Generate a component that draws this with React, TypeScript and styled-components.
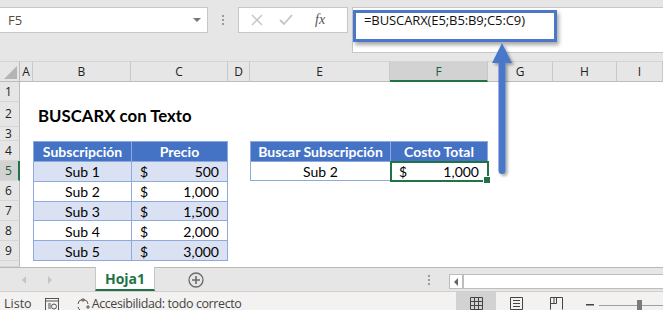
import React from "react";
import styled, { createGlobalStyle, css } from "styled-components";

const palette = {
  chrome: "#e6e6e6",
  chromeLine: "#c6c6c6",
  status: "#f3f2f1",
  excelGreen: "#217346",
  headBlue: "#4472c4",
  bandBlue: "#d9e1f2",
  tableLine: "#8ea9db",
  callout: "#4a77c9",
  text: "#000000",
  uiText: "#444444",
};

const GlobalStyle = createGlobalStyle`
  html, body {
    margin: 0;
    padding: 0;
    background: #ffffff;
  }
  * {
    box-sizing: border-box;
  }
`;

const Window = styled.div`
  position: relative;
  width: 663px;
  height: 310px;
  overflow: hidden;
  display: flex;
  flex-direction: column;
  background: #ffffff;
  font-family: "Open Sans", "Noto Sans", sans-serif;
`;

/* ---------- formula bar ---------- */

const FormulaBar = styled.div`
  height: 61px;
  flex: none;
  display: flex;
  align-items: flex-start;
  padding-top: 7px;
  background: ${palette.chrome};
`;

const NameBox = styled.div`
  width: 208px;
  height: 26px;
  display: flex;
  align-items: center;
  justify-content: space-between;
  padding: 0 6px 0 8px;
  background: #fff;
  border: 1px solid ${palette.chromeLine};
  border-left: none;
  font-size: 13px;
  color: #5a4a3a;
`;

const DropArrow = styled.span`
  width: 0;
  height: 0;
  border-left: 4px solid transparent;
  border-right: 4px solid transparent;
  border-top: 4px solid #777;
`;

const Grip = styled.div<{ $size?: number }>`
  width: ${(p) => p.$size ?? 30}px;
  height: ${(p) => p.$size ?? 26}px;
  display: flex;
  flex-direction: column;
  align-items: center;
  justify-content: center;
  gap: 2px;

  span {
    width: 2px;
    height: 2px;
    background: #9a9a9a;
  }
`;

const FxBox = styled.div`
  width: 110px;
  height: 26px;
  display: flex;
  align-items: center;
  gap: 16px;
  padding-left: 12px;
  background: #fff;
  border: 1px solid ${palette.chromeLine};
`;

const Fx = styled.span`
  font-family: "Liberation Serif", serif;
  font-style: italic;
  font-size: 14px;
  color: #555;
  margin-left: 6px;
`;

const FormulaInput = styled.div`
  flex: 1;
  height: 46px;
  margin-left: 4px;
  padding: 3px 0 0 11px;
  background: #fff;
  border: 1px solid ${palette.chromeLine};
  border-right: none;
  font-size: 13px;
  color: #111;
  letter-spacing: -0.1px;
`;

/* ---------- sheet grid ---------- */

const Sheet = styled.div`
  flex: none;
  display: grid;
  grid-template-columns: 20px 13px 98px 97px 22px 140px 98px 65px 64px 46px;
  grid-template-rows: 21px 20px 25px 14px repeat(6, 20px) 6px;
  background: #fff;
`;

const Corner = styled.div`
  grid-column: 1;
  grid-row: 1;
  position: relative;
  background: ${palette.chrome};
  border-top: 1px solid #d4d4d4;
  border-right: 1px solid #bcbcbc;
  border-bottom: 1px solid #bcbcbc;

  &::after {
    content: "";
    position: absolute;
    right: 2px;
    bottom: 2px;
    width: 0;
    height: 0;
    border-left: 13px solid transparent;
    border-bottom: 13px solid #b4b4b4;
  }
`;

const ColHead = styled.div<{ $col: number; $active?: boolean }>`
  grid-column: ${(p) => p.$col};
  grid-row: 1;
  display: flex;
  align-items: center;
  justify-content: center;
  font-size: 12px;
  color: #222;
  background: ${palette.chrome};
  border-top: 1px solid #d4d4d4;
  border-right: 1px solid #c8c8c8;
  border-bottom: 1px solid #bcbcbc;

  ${(p) =>
    p.$active &&
    css`
      background: #d2d2d2;
      color: #1e5e3a;
      border-bottom: 2px solid ${palette.excelGreen};
    `}
`;

const RowHead = styled.div<{ $row: number; $active?: boolean }>`
  grid-column: 1;
  grid-row: ${(p) => p.$row};
  display: flex;
  align-items: center;
  padding-left: 5px;
  font-size: 12px;
  line-height: 12px;
  color: #222;
  background: ${palette.chrome};
  border-right: 1px solid #bcbcbc;
  border-bottom: 1px solid #d6d6d6;

  ${(p) =>
    p.$active &&
    css`
      background: #d2d2d2;
      color: #1e5e3a;
      border-right: 2px solid ${palette.excelGreen};
    `}
`;

const Title = styled.div`
  grid-column: 3 / 6;
  grid-row: 3;
  display: flex;
  align-items: center;
  padding: 2px 0 0 5px;
  font-family: Lato, "Open Sans", sans-serif;
  font-weight: 700;
  font-size: 16.8px;
  color: ${palette.text};
  white-space: nowrap;
`;

const Table = styled.div<{ $col: string; $row: string; $cols: string }>`
  grid-column: ${(p) => p.$col};
  grid-row: ${(p) => p.$row};
  display: grid;
  grid-template-columns: ${(p) => p.$cols};
  grid-auto-rows: 1fr;
  gap: 1px;
  background: ${palette.tableLine};
  border: 1px solid ${palette.tableLine};
  font-family: Lato, "Open Sans", sans-serif;
  font-size: 14px;
`;

const Cell = styled.div<{ $kind: "head" | "band" | "plain"; $selected?: boolean }>`
  position: relative;
  display: flex;
  align-items: center;
  justify-content: center;
  padding: 1px 8px 0;
  white-space: nowrap;
  color: ${palette.text};
  background: ${(p) =>
    p.$kind === "head" ? palette.headBlue : p.$kind === "band" ? palette.bandBlue : "#fff"};

  ${(p) =>
    p.$kind === "head" &&
    css`
      color: #fff;
      font-weight: 700;
    `}

  ${(p) =>
    p.$selected &&
    css`
      &::after {
        content: "";
        position: absolute;
        inset: -1px -2px -2px -1px;
        border: 2px solid ${palette.excelGreen};
      }
      &::before {
        content: "";
        position: absolute;
        right: -4px;
        bottom: -4px;
        width: 6px;
        height: 6px;
        background: ${palette.excelGreen};
        border: 1px solid #fff;
        z-index: 1;
      }
    `}
`;

const Money = styled.span`
  flex: 1;
  display: flex;
  justify-content: space-between;
`;

/* ---------- tab bar ---------- */

const TabBar = styled.div`
  height: 24px;
  flex: none;
  display: flex;
  align-items: stretch;
  background: ${palette.chrome};
  border-top: 1px solid #b8b8b8;
`;

const NavArrows = styled.div`
  width: 95px;
  display: flex;
  align-items: center;
  gap: 22px;
  padding-left: 22px;
`;

const NavArrow = styled.span<{ $dir: "left" | "right" }>`
  width: 0;
  height: 0;
  border-top: 4px solid transparent;
  border-bottom: 4px solid transparent;
  ${(p) =>
    p.$dir === "left"
      ? css`border-right: 4px solid #c4c4c4;`
      : css`border-left: 4px solid #c4c4c4;`}
`;

const SheetTab = styled.div`
  width: 60px;
  display: flex;
  align-items: center;
  justify-content: center;
  margin-top: -1px;
  background: #fff;
  border-left: 1px solid #c6c6c6;
  border-right: 1px solid #c6c6c6;
  border-bottom: 2px solid ${palette.excelGreen};
  font-size: 14px;
  font-weight: 700;
  color: ${palette.excelGreen};
`;

const AddSheet = styled.div`
  width: 82px;
  display: flex;
  align-items: center;
  justify-content: center;
`;

const TabSpacer = styled.div`
  flex: 1;
  display: flex;
  align-items: center;
  justify-content: flex-end;
  padding-right: 12px;
`;

const HScroll = styled.div`
  width: 214px;
  height: 15px;
  margin-top: 6px;
  display: flex;
  background: #fff;
  border: 1px solid #bdbdbd;
  border-right: none;
`;

const ScrollButton = styled.div`
  width: 14px;
  display: flex;
  align-items: center;
  justify-content: center;
  border-right: 2px solid #bdbdbd;

  span {
    width: 0;
    height: 0;
    border-top: 4px solid transparent;
    border-bottom: 4px solid transparent;
    border-right: 4px solid #666;
  }
`;

/* ---------- status bar ---------- */

const StatusBar = styled.div`
  flex: 1;
  display: flex;
  align-items: flex-start;
  background: ${palette.status};
  border-top: 1px solid #d0d0d0;
  font-size: 12.5px;
  color: ${palette.uiText};
  white-space: nowrap;
`;

const StatusText = styled.span<{ $tight?: boolean }>`
  padding: 3px 0 0 ${(p) => (p.$tight ? 2 : 4)}px;
  line-height: 17px;
  letter-spacing: ${(p) => (p.$tight ? "-0.4px" : "0")};
`;

const StatusIcon = styled.span<{ $gap: number }>`
  margin-left: ${(p) => p.$gap}px;
  display: flex;
  align-items: flex-start;
  padding-top: 6px;
`;

const ViewButtons = styled.div`
  margin-left: auto;
  display: flex;
  align-items: stretch;
  height: 18px;
`;

const ViewButton = styled.div<{ $active?: boolean }>`
  width: 40px;
  display: flex;
  justify-content: center;
  padding-top: 5px;
  background: ${(p) => (p.$active ? "#d2d2d2" : "transparent")};
`;

const Zoom = styled.div`
  width: 87px;
  position: relative;
  display: flex;
  align-items: center;
  padding-left: 10px;
  margin-top: 7px;
  height: 12px;
`;

const ZoomTrack = styled.div`
  flex: 1;
  height: 1px;
  margin-left: 5px;
  background: #a0a0a0;
`;

const ZoomThumb = styled.div`
  position: absolute;
  left: 61px;
  top: 1px;
  width: 5px;
  height: 12px;
  background: #7a7a7a;
`;

/* ---------- overlays ---------- */

const Callout = styled.div`
  position: absolute;
  left: 353px;
  top: 10px;
  width: 204px;
  height: 32px;
  border: 3px solid ${palette.callout};
  box-shadow: 2px 3px 4px rgba(0, 0, 0, 0.35);
  pointer-events: none;
`;

const ArrowLayer = styled.svg`
  position: absolute;
  left: 486px;
  top: 38px;
  overflow: visible;
  pointer-events: none;
`;

const columns = ["A", "B", "C", "D", "E", "F", "G", "H", "I"];
const rows = [1, 2, 3, 4, 5, 6, 7, 8, 9, 10];

const prices = [
  { name: "Sub 1", price: "500" },
  { name: "Sub 2", price: "1,000" },
  { name: "Sub 3", price: "1,500" },
  { name: "Sub 4", price: "2,000" },
  { name: "Sub 5", price: "3,000" },
];

const App: React.FC = () => {
  return (
    <Window>
      <GlobalStyle />
      <FormulaBar>
        <NameBox>
          F5
          <DropArrow />
        </NameBox>
        <Grip>
          <span />
          <span />
          <span />
        </Grip>
        <FxBox>
          <svg width="12" height="12" viewBox="0 0 12 12">
            <path d="M1 1 L11 11 M11 1 L1 11" stroke="#c4c4c4" strokeWidth="1.4" />
          </svg>
          <svg width="14" height="12" viewBox="0 0 14 12">
            <path d="M1 6 L5 10 L13 1" stroke="#c4c4c4" strokeWidth="1.8" fill="none" />
          </svg>
          <Fx>fx</Fx>
        </FxBox>
        <FormulaInput>=BUSCARX(E5;B5:B9;C5:C9)</FormulaInput>
      </FormulaBar>

      <Sheet>
        <Corner />
        {columns.map((c, i) => (
          <ColHead key={c} $col={i + 2} $active={c === "F"}>
            {c}
          </ColHead>
        ))}
        {rows.map((r) => (
          <RowHead key={r} $row={r + 1} $active={r === 5}>
            {r < 10 ? r : null}
          </RowHead>
        ))}

        <Title>BUSCARX con Texto</Title>

        <Table $col="3 / 5" $row="5 / 11" $cols="97px 1fr">
          <Cell $kind="head">Subscripción</Cell>
          <Cell $kind="head">Precio</Cell>
          {prices.map((p, i) => (
            <React.Fragment key={p.name}>
              <Cell $kind={i % 2 === 0 ? "band" : "plain"}>{p.name}</Cell>
              <Cell $kind={i % 2 === 0 ? "band" : "plain"}>
                <Money>
                  <span>$</span>
                  <span>{p.price}</span>
                </Money>
              </Cell>
            </React.Fragment>
          ))}
        </Table>

        <Table $col="6 / 8" $row="5 / 7" $cols="139px 1fr">
          <Cell $kind="head">Buscar Subscripción</Cell>
          <Cell $kind="head">Costo Total</Cell>
          <Cell $kind="plain">Sub 2</Cell>
          <Cell $kind="plain" $selected>
            <Money>
              <span>$</span>
              <span>1,000</span>
            </Money>
          </Cell>
        </Table>
      </Sheet>

      <TabBar>
        <NavArrows>
          <NavArrow $dir="left" />
          <NavArrow $dir="right" />
        </NavArrows>
        <SheetTab>Hoja1</SheetTab>
        <AddSheet>
          <svg width="16" height="16" viewBox="0 0 16 16">
            <circle cx="8" cy="8" r="7" fill="none" stroke="#6a6a6a" strokeWidth="1.3" />
            <path d="M8 4 V12 M4 8 H12" stroke="#6a6a6a" strokeWidth="1.6" />
          </svg>
        </AddSheet>
        <TabSpacer>
          <Grip $size={16}>
            <span />
            <span />
            <span />
          </Grip>
        </TabSpacer>
        <HScroll>
          <ScrollButton>
            <span />
          </ScrollButton>
        </HScroll>
      </TabBar>

      <StatusBar>
        <StatusText>Listo</StatusText>
        <StatusIcon $gap={13}>
          <svg width="14" height="13" viewBox="0 0 14 13">
            <rect x="0.5" y="0.5" width="13" height="12" fill="none" stroke="#555" />
            <path d="M0.5 3 H13.5" stroke="#555" />
            <circle cx="9" cy="8.5" r="2.5" fill="none" stroke="#555" />
            <path d="M3 6 H6 M3 8 H6 M3 10 H6" stroke="#555" />
          </svg>
        </StatusIcon>
        <StatusIcon $gap={17}>
          <svg width="14" height="13" viewBox="0 0 14 13">
            <path
              d="M2 6 A5 5 0 0 1 6 1.5 M12 6 A5 5 0 0 0 8 1.5 M2 9 A5 5 0 0 0 4 12"
              fill="none"
              stroke="#555"
            />
            <path d="M7 0 V4 M5 2 H9 M10 9 H14 M12 7 V11" stroke="#555" />
          </svg>
        </StatusIcon>
        <StatusText $tight>Accesibilidad: todo correcto</StatusText>
        <ViewButtons>
          <ViewButton $active>
            <svg width="13" height="13" viewBox="0 0 13 13">
              <path
                d="M0.5 0.5 H12.5 V12.5 H0.5 Z M4.5 0.5 V12.5 M8.5 0.5 V12.5 M0.5 4.5 H12.5 M0.5 8.5 H12.5"
                fill="none"
                stroke="#444"
              />
            </svg>
          </ViewButton>
          <ViewButton>
            <svg width="13" height="13" viewBox="0 0 13 13">
              <path
                d="M0.5 0.5 H12.5 V12.5 H0.5 Z M3 3.5 H10 M3 6.5 H10 M3 9.5 H10"
                fill="none"
                stroke="#444"
              />
            </svg>
          </ViewButton>
          <ViewButton>
            <svg width="13" height="13" viewBox="0 0 13 13">
              <path
                d="M0.5 12.5 V0.5 H12.5 V12.5 M0.5 6.5 H6.5 V0.5 M4 0.5 V6.5"
                fill="none"
                stroke="#444"
              />
            </svg>
          </ViewButton>
        </ViewButtons>
        <Zoom>
          <svg width="8" height="2" viewBox="0 0 8 2">
            <rect width="8" height="1.5" fill="#444" />
          </svg>
          <ZoomTrack />
          <ZoomThumb />
        </Zoom>
      </StatusBar>

      <Callout />
      <ArrowLayer width="34" height="145" viewBox="0 0 34 145">
        <defs>
          <filter id="arrowShadow" x="-50%" y="-10%" width="200%" height="130%">
            <feDropShadow dx="2" dy="2" stdDeviation="1.8" floodColor="#000" floodOpacity="0.35" />
          </filter>
        </defs>
        <g filter="url(#arrowShadow)" fill={palette.callout}>
          <polygon points="16,5 26,25 6,25" />
          <rect x="12.5" y="22" width="7" height="114" rx="3.5" />
        </g>
      </ArrowLayer>
    </Window>
  );
};

export default App;
